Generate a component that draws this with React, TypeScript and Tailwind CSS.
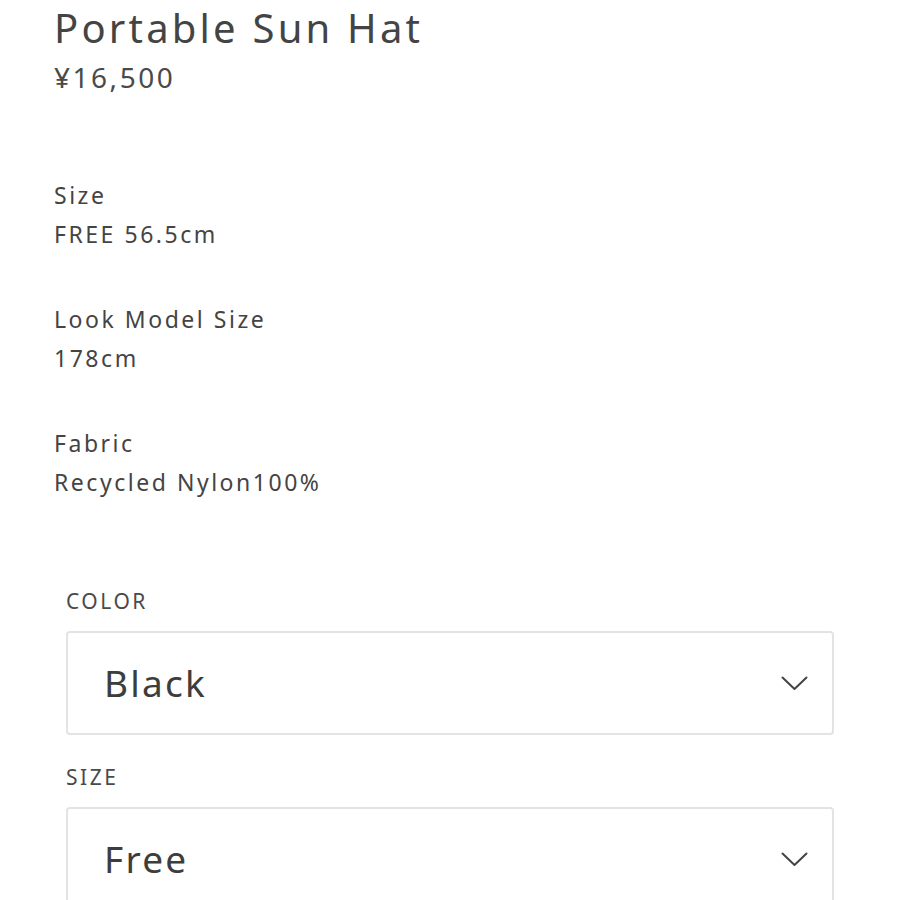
const details = [
  { label: 'Size', value: 'FREE 56.5cm' },
  { label: 'Look Model Size', value: '178cm' },
  { label: 'Fabric', value: 'Recycled Nylon100%' },
]

function Chevron() {
  return (
    <svg width="27" height="15" viewBox="0 0 27 15" fill="none" className="text-[#444]">
      <path d="M1.5 1.5 L13.5 13 L25.5 1.5" stroke="currentColor" strokeWidth="2" strokeLinecap="round" strokeLinejoin="round" />
    </svg>
  )
}

function Select({ label, value }: { label: string; value: string }) {
  return (
    <div className="flex flex-col">
      <label className="text-[21px] leading-[28px] tracking-[0.12em] text-[#4a4a4a]">{label}</label>
      <div className="mt-[16px] flex h-[104px] items-center justify-between rounded-[4px] border-2 border-[#e3e3e3] pl-[36px] pr-[24px]">
        <span className="text-[37px] tracking-[0.06em] text-[#3d3d3d]">{value}</span>
        <Chevron />
      </div>
    </div>
  )
}

export default function App() {
  return (
    <div className="min-h-[900px] w-[900px] overflow-hidden bg-white pl-[54px] pr-[66px] font-['Noto_Sans',sans-serif] text-[#3f3f3f]">
      <h1 className="pt-[2px] text-[40px] leading-[52px] tracking-[0.08em] text-[#444]">Portable Sun Hat</h1>
      <p className="pt-[2px] text-[28px] leading-[42px] tracking-[0.09em] text-[#4a4a4a]">¥16,500</p>

      <div className="mt-[78px] flex flex-col gap-[46px]">
        {details.map((d) => (
          <div key={d.label} className="text-[23px] leading-[39px] tracking-[0.11em] text-[#444]">
            <div>{d.label}</div>
            <div>{d.value}</div>
          </div>
        ))}
      </div>

      <div className="mt-[85px] flex flex-col gap-[28px] pl-[12px]">
        <Select label="COLOR" value="Black" />
        <Select label="SIZE" value="Free" />
      </div>
    </div>
  )
}
